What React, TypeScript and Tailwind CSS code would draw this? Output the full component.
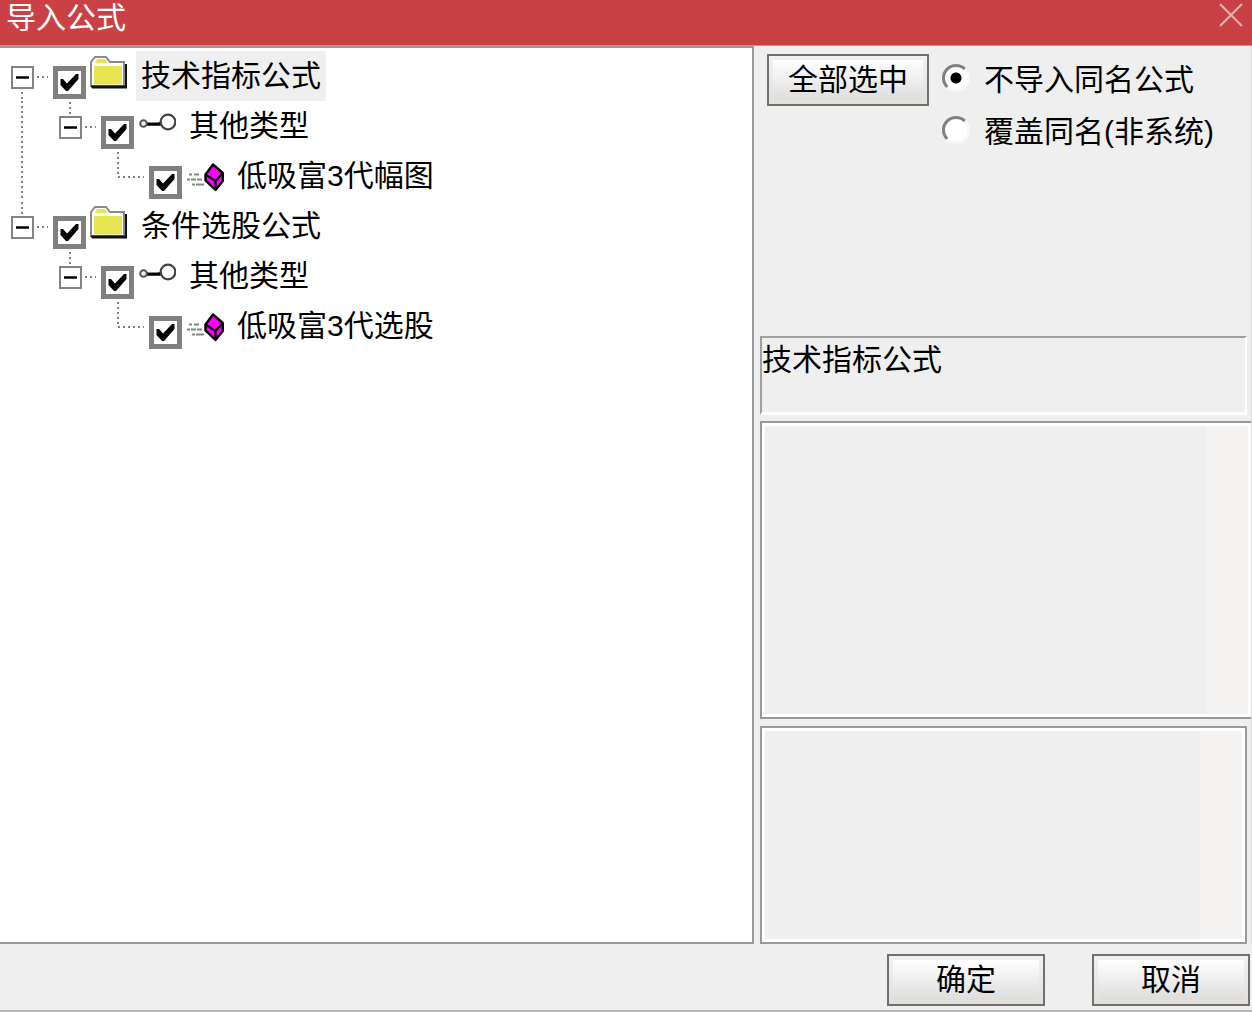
import {useState} from 'react'
import type {ReactNode} from 'react'

type IconKind = 'folder' | 'key' | 'formula'

type TreeNode = {
  id: string
  label: string
  icon: IconKind
  children?: TreeNode[]
}

const TREE: TreeNode[] = [
  {
    id: 'tech',
    label: '技术指标公式',
    icon: 'folder',
    children: [
      {
        id: 'tech-other',
        label: '其他类型',
        icon: 'key',
        children: [{id: 'tech-item', label: '低吸富3代幅图', icon: 'formula'}],
      },
    ],
  },
  {
    id: 'pick',
    label: '条件选股公式',
    icon: 'folder',
    children: [
      {
        id: 'pick-other',
        label: '其他类型',
        icon: 'key',
        children: [{id: 'pick-item', label: '低吸富3代选股', icon: 'formula'}],
      },
    ],
  },
]

export default function App() {
  return (
    <div className="flex min-h-screen flex-col border-b-2 border-[#b4b4b4] bg-[#efefef] font-['Liberation_Sans','Noto_Sans_CJK_SC',sans-serif] text-[30px] leading-9 text-black">
      <header className="flex h-[46px] items-start justify-between border-b border-[#d98a8c] bg-[#c94145] pl-[6px] pr-[9px]">
        <h1 className="text-white">导入公式</h1>
        <button type="button" aria-label="关闭" className="mt-[3px]">
          <svg width="24" height="24" viewBox="0 0 24 24" stroke="#e3b3b4" strokeWidth="2" aria-hidden="true">
            <path d="M1 1L23 23M23 1L1 23" />
          </svg>
        </button>
      </header>

      <main className="flex flex-1">
        <section aria-label="公式列表" className="flex-1 border-y-2 border-r-2 border-[#9a9a9a] bg-white pt-[3px]">
          <ul>
            {TREE.map((node, i) => (
              <TreeItem key={node.id} node={node} depth={0} guides={[]} first={i === 0} last={i === TREE.length - 1} />
            ))}
          </ul>
        </section>
        <OptionsPanel />
      </main>

      <footer className="flex justify-end gap-[47px] pb-1 pr-[2px] pt-[10px]">
        <PushButton className="w-[158px]">确定</PushButton>
        <PushButton className="w-[158px]">取消</PushButton>
      </footer>
    </div>
  )
}

function OptionsPanel() {
  return (
    <aside className="flex w-[498px] flex-col border-r border-[#dcdcdc] pl-[6px]">
      <div className="flex h-[290px] items-start pl-[7px] pt-2">
        <PushButton className="w-[162px]">全部选中</PushButton>
        <fieldset className="ml-[13px]">
          <RadioRow id="skip" label="不导入同名公式" defaultChecked />
          <RadioRow id="overwrite" label="覆盖同名(非系统)" />
        </fieldset>
      </div>

      <output className="mr-1 h-[79px] border-2 border-b-[3px] border-b-white border-l-[#a0a0a0] border-r-white border-t-[#a0a0a0] pt-1">
        技术指标公式
      </output>

      <div className="mt-[6px] flex flex-[298_1_0%] border-y-2 border-l-2 border-[#999999]">
        <Memo label="公式说明" />
      </div>
      <div className="mr-1 mt-[7px] flex flex-[217_1_0%] border-2 border-[#999999]">
        <Memo label="参数说明" />
      </div>
    </aside>
  )
}

function Memo({label}: {label: string}) {
  return (
    <div className="flex flex-1 border-[3px] border-white">
      <textarea readOnly aria-label={label} className="min-w-0 flex-1 resize-none bg-[#efefef] outline-none" />
      <div className="w-[42px] bg-[#f4f3f1]" />
    </div>
  )
}

function PushButton({children, className}: {children: ReactNode; className: string}) {
  return (
    <button
      type="button"
      className={
        className + ' h-[52px] border-2 border-[#707070] bg-linear-to-b from-[#f2f2f2] to-[#e3dfd8] p-1 active:brightness-95'
      }
    >
      <span className="flex h-full items-center justify-center bg-linear-to-b from-white to-[#dddddd]">{children}</span>
    </button>
  )
}

function RadioRow({id, label, defaultChecked}: {id: string; label: string; defaultChecked?: boolean}) {
  return (
    <div className="flex h-[52px] items-center">
      <input
        id={id}
        type="radio"
        name="duplicate"
        defaultChecked={defaultChecked}
        className="mb-1 h-7 w-7 appearance-none rounded-full border-[3px] border-b-[#f8f8f8] border-l-[#808080] border-r-[#f8f8f8] border-t-[#808080] bg-white checked:bg-[radial-gradient(circle,#000_5px,#fff_6px)]"
      />
      <label htmlFor={id} className="pl-[14px]">
        {label}
      </label>
    </div>
  )
}

type TreeItemProps = {
  node: TreeNode
  depth: number
  guides: boolean[]
  first: boolean
  last: boolean
}

function TreeItem({node, depth, guides, first, last}: TreeItemProps) {
  const [open, setOpen] = useState(true)
  const selected = node.id === 'tech'

  return (
    <li>
      <div className="flex h-[50px] items-start">
        {guides.map((line, i) => (
          <Guide key={i} d={line ? 'M22 0V50' : ''} />
        ))}
        <div className="relative">
          <Guide d={(depth === 0 && first ? '' : 'M22 1V26') + (last ? '' : 'M22 26V50') + 'M22 26H50'} />
          {node.children && (
            <button
              type="button"
              aria-label={open ? '折叠' : '展开'}
              aria-expanded={open}
              onClick={() => setOpen(!open)}
              className="absolute left-[11px] top-[15px] flex h-[23px] w-[23px] items-center justify-center border-2 border-[#848484] bg-white"
            >
              <svg width="13" height="13" viewBox="0 0 13 13" stroke="#000" strokeWidth="2.5" aria-hidden="true">
                <path d={open ? 'M0 6.5H13' : 'M0 6.5H13M6.5 0V13'} />
              </svg>
            </button>
          )}
        </div>
        <div className="relative ml-[5px] mt-[15px] h-[33px] w-[33px]">
          <input
            id={node.id}
            type="checkbox"
            defaultChecked
            className="peer block h-full w-full appearance-none border-[5px] border-[#808080] bg-white"
          />
          <svg
            viewBox="0 0 33 33"
            aria-hidden="true"
            className="pointer-events-none absolute inset-0 hidden peer-checked:block"
          >
            <path d="M7.5 13H10L14 17.5L23 8H25.5V13L15 25H13L7.5 19Z" />
          </svg>
        </div>
        <NodeIcon kind={node.icon} />
        <label
          htmlFor={node.id}
          className={(selected ? 'bg-[#efefef]' : '') + ' ml-2 flex h-[50px] items-center whitespace-nowrap px-[5px]'}
        >
          {node.label}
        </label>
      </div>
      {open && node.children && (
        <ul>
          {node.children.map((child, i) => (
            <TreeItem
              key={child.id}
              node={child}
              depth={depth + 1}
              guides={[...guides, !last]}
              first={i === 0}
              last={i === node.children!.length - 1}
            />
          ))}
        </ul>
      )}
    </li>
  )
}

// One 48px indent column with its dotted connector
function Guide({d}: {d: string}) {
  return (
    <svg
      width="48"
      height="50"
      viewBox="0 0 48 50"
      fill="none"
      stroke="#808080"
      strokeWidth="2"
      strokeDasharray="2 3"
      className="shrink-0"
      aria-hidden="true"
    >
      <path d={d} />
    </svg>
  )
}

function NodeIcon({kind}: {kind: IconKind}) {
  return (
    <svg width="40" height="40" viewBox="0 0 40 40" className="ml-[2px] mt-1 shrink-0" aria-hidden="true">
      {kind === 'folder' && (
        <>
          <defs>
            <pattern id="dither" width="5" height="5" patternUnits="userSpaceOnUse">
              <rect width="5" height="5" fill="#f0ee10" />
              <rect width="2.5" height="2.5" fill="#dedc90" />
              <rect x="2.5" y="2.5" width="2.5" height="2.5" fill="#dedc90" />
            </pattern>
          </defs>
          <path d="M4 31H36V9H39V33.5H4Z" fill="#111" />
          <path d="M3 31V7L7 2H18L22 7H36V31Z" fill="#fff" stroke="#8a8a8a" strokeWidth="2" />
          <path d="M7 8L9 4H17L20 8Z" fill="url(#dither)" />
          <path d="M6 11H34V29.5H6Z" fill="url(#dither)" />
          <path d="M3 31.5H37" stroke="#111" strokeWidth="2" />
        </>
      )}
      {kind === 'key' && (
        <g fill="none">
          <path d="M10 19H25" stroke="#000" strokeWidth="3.5" />
          <path d="M12 17.5H22" stroke="#888" strokeWidth="1" />
          <circle cx="7.5" cy="18.5" r="3.3" fill="#eee" stroke="#555" strokeWidth="2" />
          <circle cx="32" cy="17" r="7.3" fill="#fff" stroke="#444" strokeWidth="2.2" />
        </g>
      )}
      {kind === 'formula' && (
        <>
          <path
            d="M5 19.5H8M10 19.5H15M3 24.5H6M7 24.5H12M13 24.5H18M8 29.5H11M12 29.5H20"
            stroke="#858585"
            strokeWidth="2"
          />
          <path
            d="M29 9.5L21.5 19.5V25.5L31.5 35L38.8 26V18Z"
            fill="#f0f"
            stroke="#000"
            strokeWidth="2.4"
            strokeLinejoin="round"
          />
          <path d="M21.5 19.5L31.5 26L38.8 18M31.5 26V35" fill="none" stroke="#000" strokeWidth="2.2" />
        </>
      )}
    </svg>
  )
}
